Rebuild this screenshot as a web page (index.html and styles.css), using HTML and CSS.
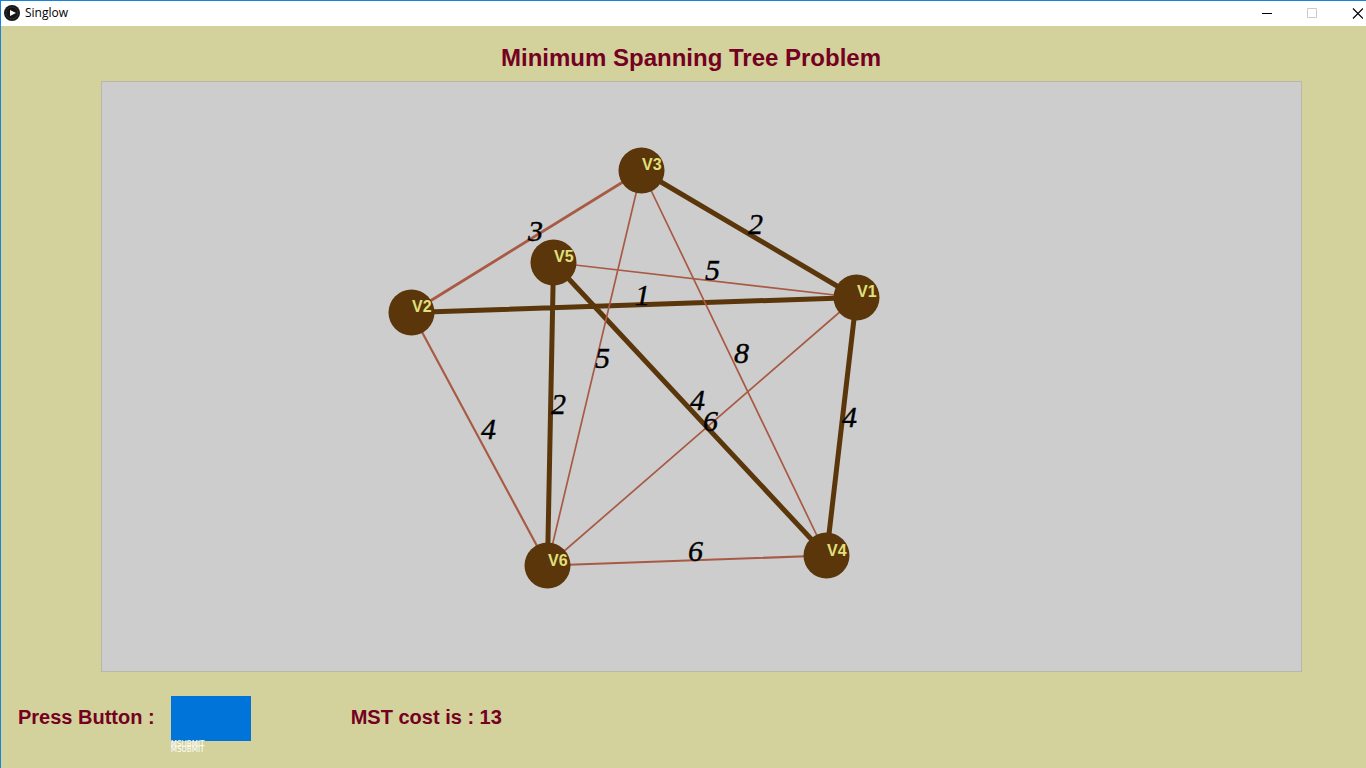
FILE: index.html
```html
<!DOCTYPE html>
<html lang="en">
<head>
<meta charset="utf-8">
<title>Singlow</title>
<link rel="stylesheet" href="styles.css">
</head>
<body>
<div class="window">
  <header class="titlebar">
    <svg class="app-icon" viewBox="0 0 16 16" aria-hidden="true"><circle cx="8" cy="8" r="8" fill="#151515"/><circle cx="8" cy="8" r="6" fill="none" stroke="#303030"/><path d="M6 5l6 3-6 3z" fill="#fff"/></svg>
    <span class="app-name">Singlow</span>
    <div class="controls">
      <button class="control" type="button" aria-label="Minimize"><svg viewBox="0 0 12 12"><path d="M1 6.500h10" stroke="#000"/></svg></button>
      <button class="control" type="button" aria-label="Maximize" disabled><svg viewBox="0 0 12 12"><path d="M1.500 1.500h9v9h-9z" fill="none" stroke="#ccc"/></svg></button>
      <button class="control" type="button" aria-label="Close"><svg viewBox="0 0 12 12"><path d="M2 1.500l10 10M12 1.500l-10 10" stroke="#000" stroke-width="1.200"/></svg></button>
    </div>
  </header>
  <main class="content">
    <h1 class="heading">Minimum Spanning Tree Problem</h1>
    <div class="panel">
      <svg class="graph" viewBox="102 82 1199 589" role="img" aria-label="Weighted graph with its minimum spanning tree">
        <g class="edge">
          <path class="edge-wide" d="M411.500 312.500L641.500 170.500"/>
          <path class="edge-mid" d="M411.500 312.500L547.500 565.500M547.500 565.500L826.500 555.500"/>
          <path d="M553.500 262.500L856.500 297.500M856.500 297.500L547.500 565.500"/>
        </g>
        <path class="edge-tree" d="M641.500 170.500L856.500 297.500M411.500 312.500L856.500 297.500M856.500 297.500L826.500 555.500M553.500 262.500L826.500 555.500M553.500 262.500L547.500 565.500"/>
        <path class="edge" d="M641.500 170.500L547.500 565.500M641.500 170.500L826.500 555.500"/>
        <g class="weight">
          <text x="528" y="241">3</text>
          <text x="748" y="234">2</text>
          <text x="705" y="280">5</text>
          <text x="635" y="305">1</text>
          <text x="595" y="368">5</text>
          <text x="734" y="363">8</text>
          <text x="551" y="414">2</text>
          <text x="690" y="410">4</text>
          <text x="703" y="431">6</text>
          <text x="842" y="427">4</text>
          <text x="481" y="439">4</text>
          <text x="688" y="561">6</text>
        </g>
        <g class="node">
          <circle cx="856.500" cy="297.500" r="23"/>
          <circle cx="411.500" cy="312.500" r="23"/>
          <circle cx="641.500" cy="170.500" r="23"/>
          <circle cx="826.500" cy="555.500" r="23"/>
          <circle cx="553.500" cy="262.500" r="23"/>
          <circle cx="547.500" cy="565.500" r="23"/>
        </g>
        <g class="node-center">
          <circle cx="856.500" cy="297.500" r="3"/>
          <circle cx="411.500" cy="312.500" r="3"/>
          <circle cx="641.500" cy="170.500" r="3"/>
          <circle cx="826.500" cy="555.500" r="3"/>
          <circle cx="553.500" cy="262.500" r="3"/>
          <circle cx="547.500" cy="565.500" r="3"/>
        </g>
        <g class="node-name">
          <text x="857" y="297">V1</text>
          <text x="412" y="312">V2</text>
          <text x="642" y="170">V3</text>
          <text x="827" y="556">V4</text>
          <text x="554" y="262">V5</text>
          <text x="548" y="566">V6</text>
        </g>
      </svg>
    </div>
    <div class="actions">
      <span class="caption" id="press">Press Button :</span>
      <div class="submit">
        <button class="submit-button" id="submit" type="button" aria-labelledby="press submit-label"></button>
        <label class="submit-label" id="submit-label" for="submit">MSUBMIT<br>MSUBMIT</label>
      </div>
      <output class="caption cost">MST cost is : 13</output>
    </div>
  </main>
</div>
</body>
</html>
```
FILE: styles.css
```css
* {
  box-sizing: border-box;
}

body {
  margin: 0;
  font-family: "Liberation Sans", Arial, sans-serif;
}

.window {
  display: flex;
  flex-direction: column;
  min-height: 100vh;
  border-top: 1px solid #1883d7;
  border-left: 1px solid #1883d7;
  background: #d3d29c;
}

.titlebar {
  display: flex;
  align-items: center;
  gap: 5px;
  height: 25px;
  padding: 0 3px 1px;
  background: #fff;
}

.app-icon {
  width: 16px;
  height: 16px;
}

.app-name {
  font: 12px/16px "Open Sans", "Noto Sans", sans-serif;
  color: #000;
}

.controls {
  display: flex;
  gap: 33px;
  margin-left: auto;
}

.control {
  display: flex;
  width: 12px;
  height: 12px;
  padding: 0;
  border: 0;
  background: none;
}

.control svg {
  width: 12px;
  height: 12px;
}

.content {
  flex: 1;
  color: #740022;
}

.heading {
  margin: 0;
  padding: 18px 0 9px 15px;
  font-size: 24px;
  line-height: 28px;
  text-align: center;
}

.panel {
  margin: 0 64px 0 100px;
  border: 1px solid #b9b8a8;
  background: #cdcdcd;
}

.graph {
  display: block;
  width: 100%;
  height: auto;
}

.edge {
  fill: none;
  stroke: #a85a44;
  stroke-width: 1.7;
}

.edge-mid {
  stroke-width: 2.2;
}

.edge-wide {
  stroke-width: 2.8;
}

.edge-tree {
  fill: none;
  stroke: #5a360a;
  stroke-width: 5;
}

.weight {
  font: italic 30px "Liberation Serif", "Times New Roman", serif;
  fill: #000;
  stroke: #000;
  stroke-width: 0.4;
}

.node {
  fill: #5a360a;
}

.node-center {
  fill: #61340e;
}

.node-name {
  font: bold 16px "Liberation Sans", Arial, sans-serif;
  fill: #e0e07c;
}

.actions {
  display: flex;
  align-items: flex-start;
  padding: 24px 17px 16px;
}

.caption {
  font-size: 20px;
  font-weight: bold;
  line-height: 42px;
}

.submit {
  display: flex;
  flex-direction: column;
  margin-left: 16px;
}

.submit-button {
  width: 80px;
  height: 45px;
  border: 0;
  background: #0074d9;
}

.submit-label {
  padding-top: 1px;
  font: 8px/5px "DejaVu Sans Condensed", "DejaVu Sans", sans-serif;
  color: #fff;
}

.cost {
  margin-left: 100px;
}
```
